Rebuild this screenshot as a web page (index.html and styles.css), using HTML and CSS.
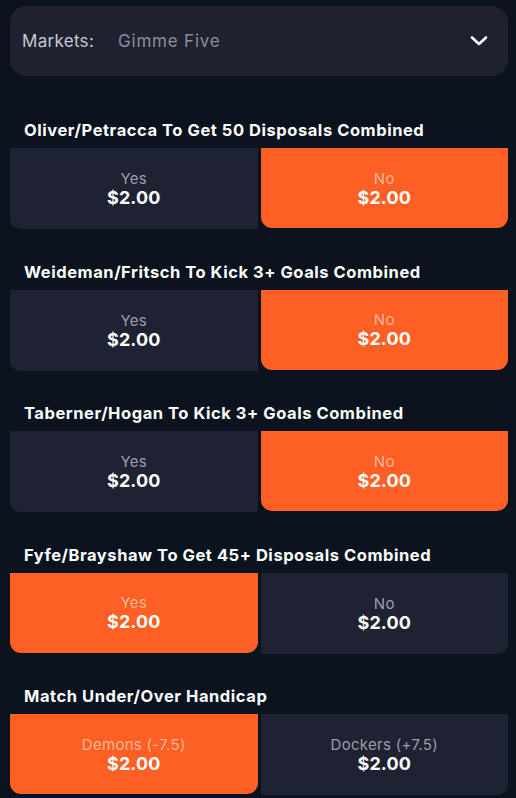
FILE: index.html
```html
<!DOCTYPE html>
<html>
<head>
<meta charset="utf-8">
<link rel="stylesheet" href="styles.css">
</head>
<body>
<div class="page">
  <div class="markets">
    <span class="markets-label">Markets:</span>
    <span class="markets-value">Gimme Five</span>
    <svg class="chevron" width="18" height="12" viewBox="0 0 18 12"><path d="M2 2.5 L9 9 L16 2.5" fill="none" stroke="#ffffff" stroke-width="2.6" stroke-linecap="round" stroke-linejoin="round"/></svg>
  </div>

  <section class="market">
    <h2 class="title">Oliver/Petracca To Get 50 Disposals Combined</h2>
    <div class="options">
      <div class="opt opt-left"><span class="lbl">Yes</span><span class="price">$2.00</span></div>
      <div class="opt opt-right sel"><span class="lbl">No</span><span class="price">$2.00</span></div>
    </div>
  </section>

  <section class="market">
    <h2 class="title">Weideman/Fritsch To Kick 3+ Goals Combined</h2>
    <div class="options">
      <div class="opt opt-left"><span class="lbl">Yes</span><span class="price">$2.00</span></div>
      <div class="opt opt-right sel"><span class="lbl">No</span><span class="price">$2.00</span></div>
    </div>
  </section>

  <section class="market">
    <h2 class="title">Taberner/Hogan To Kick 3+ Goals Combined</h2>
    <div class="options">
      <div class="opt opt-left"><span class="lbl">Yes</span><span class="price">$2.00</span></div>
      <div class="opt opt-right sel"><span class="lbl">No</span><span class="price">$2.00</span></div>
    </div>
  </section>

  <section class="market">
    <h2 class="title">Fyfe/Brayshaw To Get 45+ Disposals Combined</h2>
    <div class="options">
      <div class="opt opt-left sel"><span class="lbl">Yes</span><span class="price">$2.00</span></div>
      <div class="opt opt-right"><span class="lbl">No</span><span class="price">$2.00</span></div>
    </div>
  </section>

  <section class="market">
    <h2 class="title">Match Under/Over Handicap</h2>
    <div class="options">
      <div class="opt opt-left sel"><span class="lbl">Demons (-7.5)</span><span class="price">$2.00</span></div>
      <div class="opt opt-right"><span class="lbl">Dockers (+7.5)</span><span class="price">$2.00</span></div>
    </div>
  </section>
</div>
</body>
</html>
```
FILE: styles.css
```css
* { box-sizing: border-box; }
html, body {
  margin: 0;
  padding: 0;
  background: #0b131e;
  font-family: Inter, "Open Sans", sans-serif;
  color: #ffffff;
}
.page {
  padding: 6px 8px 0 10px;
  overflow: hidden;
  height: 798px;
}
.markets {
  height: 70px;
  border-radius: 16px;
  background: #1f2131;
  display: flex;
  align-items: center;
  padding: 0 20px 0 12px;
  font-size: 17px;
  letter-spacing: 0.3px;
  margin-bottom: 12px;
}
.markets-label { color: #c9cad0; width: 96px; }
.markets-value { color: #8b8e99; flex: 1; letter-spacing: 0.8px; }
.chevron { display: block; }
.market { margin-top: 32.5px; }
.market:first-of-type { margin-top: 44px; }
.title {
  margin: 0 0 8px 14px;
  font-size: 16.5px;
  line-height: 20px;
  font-weight: 700;
  letter-spacing: 0.55px;
  color: #ffffff;
}
.options {
  display: grid;
  grid-template-columns: 1fr 1fr;
  gap: 3px;
  height: 81px;
}
.opt {
  background: #1f2232;
  display: flex;
  flex-direction: column;
  align-items: center;
  justify-content: center;
  gap: 1px;
  padding-top: 1px;
}
.opt-left { border-radius: 0 0 0 10px; }
.opt-right { border-radius: 0 0 10px 0; }
.opt.sel {
  background: #fe5f24;
  border-radius: 0 0 11px 11px;
  height: 80px;
}
.lbl {
  font-size: 15px;
  line-height: 17px;
  letter-spacing: 0.3px;
  color: #9c9ea8;
}
.sel .lbl { color: #fcb597; }
.price {
  font-size: 18px;
  line-height: 20px;
  font-weight: 700;
  letter-spacing: 0.1px;
  color: #ffffff;
}
```
